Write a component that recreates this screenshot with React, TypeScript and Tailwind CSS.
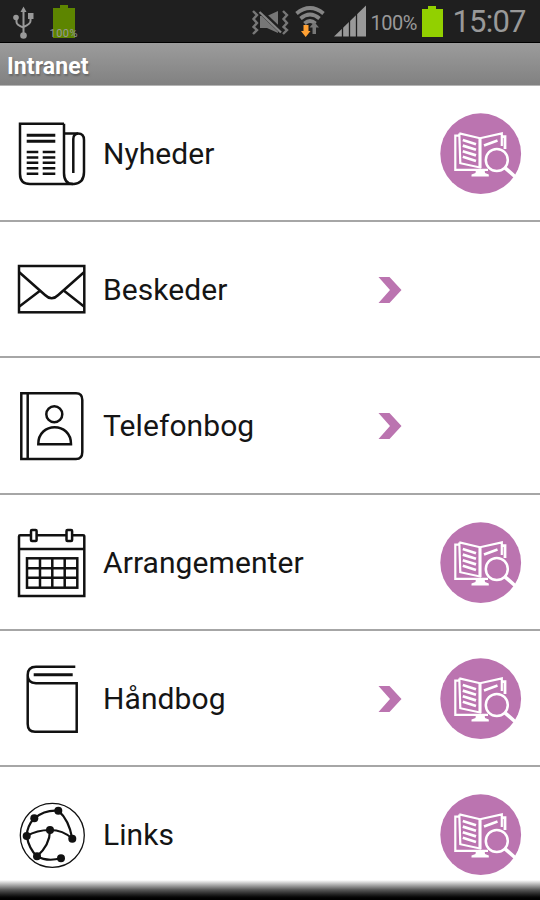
import type { ReactNode } from "react";

type Item = {
  label: string;
  icon: ReactNode;
  arrow?: boolean;
  badge?: boolean;
};

const LineIcon = ({ children }: { children: ReactNode }) => (
  <svg
    viewBox="0 0 72 72"
    className="w-[72px] h-[72px] shrink-0"
    fill="none"
    stroke="#111"
    strokeWidth="2.5"
  >
    {children}
  </svg>
);

const NewsIcon = () => (
  <LineIcon>
    <path d="M48 5.7H4V56Q4 66 14 66H58Q68 65 68 54V22Q68 15.5 62 15.5H48" />
    <path d="M48 5.7V55Q48 66 57 66M62 15.5Q57.3 16 57.3 21V55" />
    <path d="M10.7 17.3H39.3M10.7 23.3H39.3" strokeWidth="2.9" />
    <path d="M10.7 34H22.3M10.7 39.4H22.3M10.7 44.8H22.3M10.7 50.2H22.3M10.7 55.7H22.3" />
    <path d="M26.7 34H39.3M26.7 39.4H39.3M26.7 44.8H39.3M26.7 50.2H39.3M26.7 55.7H39.3" />
  </LineIcon>
);

const MailIcon = () => (
  <LineIcon>
    <rect x="3" y="12" width="65.3" height="46.3" />
    <path d="M3 18L29 41Q35.7 47.5 42.3 41L68.3 18" />
    <path d="M24 36.7L3 52.7M48 36.7L68.3 52.7" />
  </LineIcon>
);

const PhonebookIcon = () => (
  <LineIcon>
    <path d="M5.3 3.3H60Q66.3 3.3 66.3 10V62Q66.3 69 60 69H5.3Z" />
    <path d="M11.7 3.3V69" />
    <circle cx="38.3" cy="24.3" r="8" />
    <path d="M22.3 54.3C22 31.5 55.3 31.5 55 54.3Z" />
  </LineIcon>
);

const CalendarIcon = () => (
  <LineIcon>
    <path d="M15 8.3H4.2Q3 8.3 3 9.5V69H68.3V9.5Q68.3 8.3 67 8.3H56.3M21 8.3H50.3M3 22H68.3" />
    <rect x="15" y="3" width="5.6" height="11" rx="1" />
    <rect x="50.5" y="3" width="5.6" height="11" rx="1" />
    <rect x="11" y="31.3" width="50.3" height="29.4" />
    <path d="M24 31.3V60.7M36.3 31.3V60.7M48.7 31.3V60.7M11 41.3H61.3M11 50.8H61.3" />
  </LineIcon>
);

const BookIcon = () => (
  <LineIcon>
    <path d="M59.3 3.7H20Q11.7 3.7 11.7 12V61Q11.7 68.7 19 68.7H60.7V20.3H20Q11.7 19.5 11.7 13" />
    <path d="M17.7 11.7H56.7" strokeWidth="3" />
  </LineIcon>
);

const nodes = [
  [42.3, 11.7],
  [18.3, 19.3],
  [10.7, 37],
  [34, 31],
  [56.3, 39.7],
  [21, 57.3],
  [45, 59.3],
];

const LinksIcon = () => (
  <LineIcon>
    <circle cx="36.3" cy="36.3" r="32" strokeWidth="1.3" />
    <path
      strokeWidth="2.2"
      d="M18.3 19.3Q29 10.5 42.3 11.7Q53 21 56.3 39.7Q47 31 34 31Q21 31 10.7 37Q11 27 18.3 19.3M10.7 37Q13 50 21 57.3Q34 46 34 31M21 57.3Q31 63 45 59.3"
    />
    {nodes.map(([x, y]) => (
      <circle key={`${x}-${y}`} cx={x} cy={y} r="4" fill="#111" stroke="none" />
    ))}
  </LineIcon>
);

const Badge = () => (
  <svg
    viewBox="0 0 82 82"
    className="w-[82px] h-[82px]"
    fill="none"
    stroke="#fff"
    strokeWidth="2.2"
  >
    <circle cx="40.7" cy="40.7" r="40.4" fill="#bb74b0" stroke="none" />
    <path d="M19 22.6H15.3V56.8H48" />
    <path d="M36 56H44.5L45 60L48.8 61.5V63.5H31.5V61.5L35.5 60Z" fill="#fff" stroke="none" />
    <path d="M19.3 20.4L40 25.2L61.8 20.4V33M19.3 20.4L20.3 50.2L40 54.5V25" />
    <path d="M40 25V55" strokeWidth="3" />
    <path d="M62 23.6H65V36" strokeWidth="2.8" />
    <path
      d="M22.8 27L36 31.2M22.8 32.6L36 36.8M22.8 38.2L36 42.4M22.8 43.8L36 48"
      strokeWidth="2.7"
    />
    <path d="M44 32.5L57.5 27.5" strokeWidth="2.5" />
    <circle cx="56.8" cy="47" r="11" fill="#bb74b0" strokeWidth="2.5" />
    <path d="M65 54.8L75.5 64" strokeWidth="3.6" />
  </svg>
);

const items: Item[] = [
  { label: "Nyheder", icon: <NewsIcon />, badge: true },
  { label: "Beskeder", icon: <MailIcon />, arrow: true },
  { label: "Telefonbog", icon: <PhonebookIcon />, arrow: true },
  { label: "Arrangementer", icon: <CalendarIcon />, badge: true },
  { label: "Håndbog", icon: <BookIcon />, arrow: true, badge: true },
  { label: "Links", icon: <LinksIcon />, badge: true },
];

const Row = ({ item }: { item: Item }) => (
  <div className="flex items-center h-[136.2px] shrink-0 pt-0.5 pl-4 pr-[18px] border-b-2 border-[#a6a6a6]">
    {item.icon}
    <span className="flex-1 ml-[15px] text-[30px] leading-none tracking-[0.08px] text-[#151515]">
      {item.label}
    </span>
    <div className="w-[62px] flex">
      {item.arrow && (
        <svg viewBox="0 0 24 26" className="w-6 h-[26px]" fill="#bb74b0">
          <path d="M0.5 0H11.5L23.5 13L11.5 26H0.5L12 13Z" />
        </svg>
      )}
    </div>
    <div className="w-[82px] h-[82px]">{item.badge && <Badge />}</div>
  </div>
);

const StatusBar = () => (
  <div className="flex h-[42px] shrink-0 bg-[#1f1f1f]">
    <svg viewBox="0 0 90 42" className="w-[90px] h-[42px]" fill="none">
      <g stroke="#999" strokeWidth="2">
        <path d="M23.5 9V35M16.5 18V22Q16.5 25 23.5 27.5M30.5 17V21Q30.5 24 23.5 27" />
        <path d="M20.5 12L23.5 6.5L26.5 12Z" fill="#999" stroke="none" />
        <circle cx="16" cy="17.5" r="2.8" fill="#999" stroke="none" />
        <path d="M28 13H33.5V19H28Z" fill="#999" stroke="none" />
        <circle cx="23.5" cy="35.5" r="3.3" fill="#999" stroke="none" />
      </g>
      <path d="M53 8H60V5H68V8H75V38H53Z" fill="#5d8500" />
      <text x="49.5" y="37" fontSize="11" textLength="28" fill="#999">
        100%
      </text>
    </svg>
    <div className="flex-1" />
    <svg viewBox="250 0 118 42" className="w-[118px] h-[42px]" fill="none">
      <path d="M260 16H267L278 11V33L267 28H260Z" fill="#777" />
      <path d="M259 10L282 32" stroke="#1f1f1f" strokeWidth="5" />
      <path d="M259.5 12L281 32.5" stroke="#858585" strokeWidth="2.4" />
      <path
        d="M253 11L257 15L253.5 19L257 23L253.5 27L257 30L253 34M283 11L287 15L283.5 19L287 23L283.5 27L287 30L283 34"
        stroke="#777"
        strokeWidth="2.4"
      />
      <path
        d="M296.5 13.5Q310 2.5 323.5 13.5M300.5 18.5Q310 10.5 319.5 18.5M304.5 23.5Q310 18.5 315.5 23.5"
        stroke="#858585"
        strokeWidth="3.8"
      />
      <path d="M303.5 25H308.5V31H310.5L305.7 37L301 31H303.5Z" fill="#ffa033" />
      <path d="M312.5 34V27.5H309.5L314.3 22L319 27.5H316V34Z" fill="#777" />
      <path d="M334 36.5L366 5.5V36.5Z" fill="#999" />
      <path d="M342.5 25V37M349.5 18V37M356.5 12V37" stroke="#1f1f1f" strokeWidth="1.3" />
    </svg>
    <svg viewBox="368 0 172 42" className="w-[172px] h-[42px]">
      <text x="370.5" y="30" fontSize="20" textLength="47" fill="#999">
        100%
      </text>
      <path d="M422 9H428V6H436V9H443V37H422Z" fill="#92d000" />
      <text x="452.5" y="32" fontSize="31" textLength="74" fill="#999">
        15:07
      </text>
    </svg>
  </div>
);

const App = () => {
  return (
    <div className="relative w-[540px] h-[900px] overflow-hidden flex flex-col bg-white font-[Roboto,sans-serif]">
      <StatusBar />
      <header className="flex items-center h-11 shrink-0 pl-[7px] pt-1 border-t border-t-black border-b border-b-[#b5b5b5] bg-linear-to-b from-[#9c9c9c] to-[#818181]">
        <h1 className="text-[23px] leading-none font-bold text-white tracking-[0.1px] [text-shadow:1px_2px_2px_#666]">
          Intranet
        </h1>
      </header>
      <main className="flex flex-col">
        {items.map((item) => (
          <Row key={item.label} item={item} />
        ))}
      </main>
      <div className="absolute inset-x-0 bottom-0 h-5 bg-linear-to-b from-white/0 via-[#555] to-black" />
    </div>
  );
};

export default App;
